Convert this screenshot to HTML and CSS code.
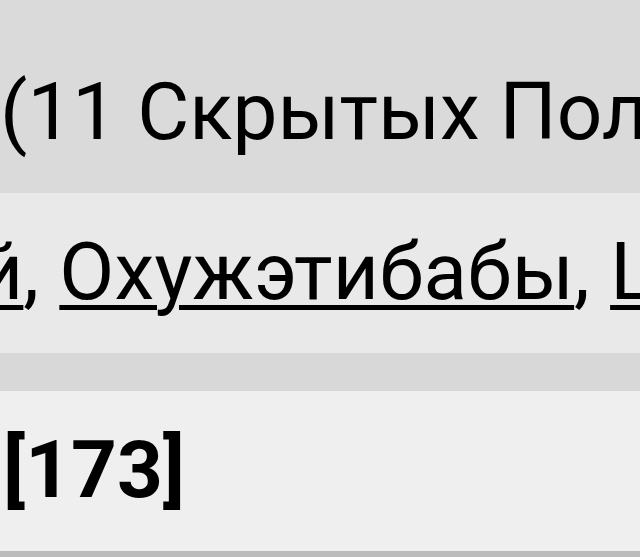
FILE: index.html
```html
<!DOCTYPE html>
<html lang="ru">
<head>
  <meta charset="UTF-8" />
  <meta name="viewport" content="width=device-width, initial-scale=1.0" />
  <title>Кто онлайн</title>
  <link rel="stylesheet" href="styles.css">
</head>
<body>
  <div class="online-block">
    <div class="row row-hidden">(11 Скрытых Пользователей)</div>
    <div class="row row-users">
      <a href="#">Андрей</a>, <a href="#">Охужэтибабы</a>, <a href="#">Шпион</a>
    </div>
    <div class="spacer"></div>
    <div class="row row-count"><b>[173]</b></div>
  </div>
</body>
</html>
```

FILE: styles.css
```css
* { margin: 0; padding: 0; box-sizing: border-box; }
body {
  font-family: Roboto, 'Noto Sans', sans-serif;
  background: #bcbcbc;
  color: #000;
  height: 100vh;
  overflow: hidden;
}
.online-block {
  display: flex;
  flex-direction: column;
  border-bottom: 6px solid #bcbcbc;
}
.row {
  font-size: 80px;
  line-height: 94px;
  white-space: nowrap;
  overflow: hidden;
  padding: 32px 0 34px 0;
}
.row-hidden {
  background: #dadada;
  padding-top: 65px;
}
.row-users {
  background: #e9e9e9;
  text-indent: -258px;
  letter-spacing: 0.2px;
}
.row-users a {
  color: #000;
  text-decoration: underline;
  text-decoration-thickness: 5px;
  text-underline-offset: 6px;
}
.spacer {
  height: 38px;
  background: #d8d8d8;
}
.row-count {
  background: #efefef;
  padding-left: 3px;
}
.row-count b {
  font-weight: bold;
}
```
